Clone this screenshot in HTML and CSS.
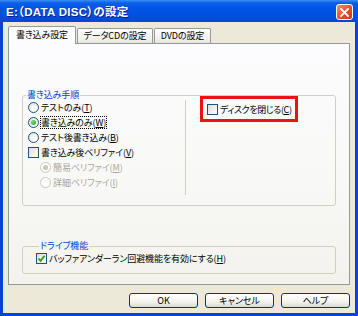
FILE: index.html
```html
<!DOCTYPE html>
<html lang="ja">
<head>
<meta charset="utf-8">
<link rel="stylesheet" href="styles.css">
</head>
<body>
<div class="window">
  <div class="titlebar">
    <span class="title">E:（DATA DISC）の設定</span>
    <span class="close"><svg width="9" height="9" viewBox="0 0 9 9"><path d="M1 1L8 8M8 1L1 8" stroke="#fff" stroke-width="1.8" stroke-linecap="square"/></svg></span>
  </div>
  <div class="client">
    <div class="tabs">
      <div class="tab active">書き込み設定</div>
      <div class="tab">データCDの設定</div>
      <div class="tab">DVDの設定</div>
    </div>
    <div class="panel">
      <fieldset class="group group-write">
        <legend>書き込み手順</legend>
        <div class="cols">
          <div class="col-left">
            <div class="row"><span class="radio"></span><span>テストのみ(<u>T</u>)</span></div>
            <div class="row"><span class="radio on"></span><span class="focus">書き込みのみ(<u>W</u>)</span></div>
            <div class="row"><span class="radio"></span><span>テスト後書き込み(<u>B</u>)</span></div>
            <div class="row"><span class="check"></span><span>書き込み後ベリファイ(<u>V</u>)</span></div>
            <div class="row sub disabled"><span class="radio on"></span><span>簡易ベリファイ(<u>M</u>)</span></div>
            <div class="row sub disabled"><span class="radio"></span><span>詳細ベリファイ(<u>I</u>)</span></div>
          </div>
          <div class="col-right">
            <div class="highlight">
              <div class="row"><span class="check"></span><span class="tight">ディスクを閉じる(<u>C</u>)</span></div>
            </div>
          </div>
        </div>
      </fieldset>
      <fieldset class="group group-drive">
        <legend>ドライブ機能</legend>
        <div class="row"><span class="check checked"><svg width="9" height="9" viewBox="0 0 9 9"><path d="M1.5 4.5L3.6 6.8L7.6 1.8" fill="none" stroke="#21A121" stroke-width="1.8"/></svg></span><span>バッファアンダーラン回避機能を有効にする(<u>H</u>)</span></div>
      </fieldset>
    </div>
    <div class="buttons">
      <button class="btn">OK</button>
      <button class="btn">キャンセル</button>
      <button class="btn">ヘルプ</button>
    </div>
  </div>
</div>
</body>
</html>
```
FILE: styles.css
```css
* { box-sizing: border-box; }
html, body { margin: 0; padding: 0; }
body {
  width: 358px;
  height: 316px;
  overflow: hidden;
  font-family: "Noto Sans CJK JP", "Liberation Sans", sans-serif;
  font-size: 9px;
  letter-spacing: -0.1px;
  font-feature-settings: "palt";
  color: #000;
}
.window {
  width: 358px;
  height: 316px;
  background: #0842d8;
  display: flex;
  flex-direction: column;
}
.titlebar {
  height: 22px;
  flex: none;
  display: flex;
  align-items: center;
  justify-content: space-between;
  padding: 0 5px 0 6px;
  background: linear-gradient(#3d8cf5 0px, #0a5fe8 3px, #0056e6 8px, #0050de 16px, #0646d4 22px);
}
.title {
  color: #fff;
  font-family: "Liberation Sans", "Noto Sans CJK JP", sans-serif;
  font-weight: bold;
  font-size: 11.5px;
  letter-spacing: 0.3px;
  text-shadow: 1px 1px 0 #0a1e8c;
}
.close {
  width: 17px;
  height: 16px;
  margin-top: 2px;
  border: 1px solid #fff;
  border-radius: 3px;
  background: linear-gradient(135deg, #f28e6d, #e2522b 55%, #c7381b);
  display: flex;
  align-items: center;
  justify-content: center;
}
.client {
  flex: 1;
  margin: 0 3px 3px 3px;
  background: #ece9d8;
  padding: 4px 5px 0 5px;
  display: flex;
  flex-direction: column;
}
.tabs {
  height: 17px;
  display: flex;
  align-items: flex-end;
  position: relative;
  z-index: 1;
}
.tab {
  height: 15px;
  padding: 0 5px;
  border: 1px solid #919b9c;
  border-bottom: none;
  border-radius: 2px 2px 0 0;
  background: linear-gradient(#fefefe, #f2f1ec 70%, #e6e4dc);
  line-height: 14px;
  white-space: nowrap;
  margin-right: 1px;
  text-align: center;
}
.tab:nth-child(1) { width: 68px; }
.tab:nth-child(2) { width: 76px; }
.tab:nth-child(3) { width: 57px; }
.tab.active {
  height: 18px;
  margin-bottom: -1px;
  background: #fcfcfe;
  line-height: 16px;
}
.panel {
  height: 242px;
  border: 1px solid #919b9c;
  background: linear-gradient(#fcfcfe, #f8f8f6 60%, #f3f2ed);
  padding: 0 13px;
  display: flex;
  flex-direction: column;
}
.group {
  margin: 0;
  border: 1px solid #d0d0bf;
  border-radius: 3px;
  min-width: 0;
}
.group legend {
  color: #0046d5;
  padding: 0 1px;
  margin-left: 3px;
  line-height: 10px;
  height: 10px;
}
.group-write {
  margin-top: 46px;
  height: 116px;
  padding: 0;
}
.cols {
  display: flex;
  height: 100%;
}
.col-left {
  width: 163px;
  border-right: 1px solid #d0d0bf;
  padding: 0 0 0 5px;
  height: 95px;
}
.col-right {
  flex: 1;
  padding-left: 14px;
  margin-top: -4px;
}
.row {
  height: 15px;
  display: flex;
  align-items: center;
  white-space: nowrap;
}
.row u { text-decoration: underline; }
.radio {
  width: 11px;
  height: 11px;
  border-radius: 50%;
  border: 1px solid #1c5180;
  background: radial-gradient(circle at 65% 65%, #fff 20%, #e4e3dc 80%);
  margin-right: 2px;
  display: inline-flex;
  align-items: center;
  justify-content: center;
  flex: none;
}
.radio.on::after {
  content: "";
  width: 5px;
  height: 5px;
  border-radius: 50%;
  background: radial-gradient(circle at 35% 35%, #6be26b, #21a121);
}
.check {
  width: 11px;
  height: 11px;
  border: 1px solid #1c5180;
  background: linear-gradient(135deg, #dcdcd5, #fff);
  margin-right: 2px;
  display: inline-flex;
  align-items: center;
  justify-content: center;
  flex: none;
}
.focus {
  outline: 1px dotted #000;
  outline-offset: 0;
  line-height: 11px;
}
.sub { padding-left: 12px; }
.disabled { color: #aca899; }
.disabled .radio {
  border-color: #cac8bb;
  background: #fff;
}
.disabled .radio.on::after { background: #cac8bb; }
.highlight {
  display: inline-block;
  border: 3px solid #ee1111;
  padding: 3px 3px 5px 4px;
  height: 26px;
}
.tight { letter-spacing: -0.4px; }
.group-drive {
  margin-top: 35px;
  height: 33px;
  padding: 0 0 0 13px;
}
.buttons {
  display: flex;
  justify-content: flex-end;
  gap: 7px;
  margin-top: 8px;
}
.btn {
  width: 69px;
  height: 15px;
  padding: 0;
  border: 1px solid #003c74;
  border-radius: 3px;
  background: linear-gradient(#ffffff, #f4f3ee 60%, #dcd8cc);
  font: inherit;
  font-size: 9px;
  line-height: 13px;
  color: #000;
}
```
